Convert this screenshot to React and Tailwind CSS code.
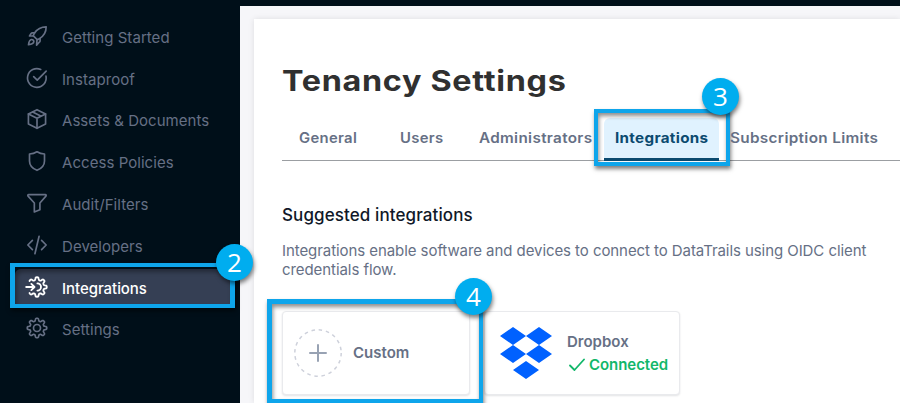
import React from "react";

// Outline of an eight-toothed cog; from and to are angles in degrees, 0 pointing left.
function cog(from, to) {
  const points = [];
  for (let a = from; a <= to; a += 3) {
    const t = (a * Math.PI) / 180;
    const wave = Math.tanh(2 * Math.cos(8 * t)) / Math.tanh(2);
    const r = 10.1 + 1.6 * wave;
    points.push(`${(12 - r * Math.cos(t)).toFixed(2)} ${(12 - r * Math.sin(t)).toFixed(2)}`);
  }
  return `M${points.join("L")}`;
}

const icons = {
  rocket: (
    <>
      <path d="M23 1C17 1 12.500 3.200 9 8.500l-1.600 3 5 5 3-1.600C20.800 11.500 23 7 23 1z" />
      <path d="M9.300 8.200H6.500a2 2 0 0 0-1.600.8L3 12l4.500 0M15.700 14.800v2.800a2 2 0 0 1-.8 1.600L11.500 23l.5-6.500" />
      <path d="M5.500 16.200c-2 .3-3.200 1.800-3.700 6.300 4.500-.5 6.200-1.700 6.400-3.700a2.500 2.500 0 0 0-2.700-2.600z" />
    </>
  ),
  check: (
    <>
      <path d="M22.800 9.800A11.200 11.200 0 1 1 16.500 1.800" />
      <path d="M23 3.800 12.300 14.500 8 10.300" />
    </>
  ),
  box: (
    <>
      <path d="M12 .8 22.300 6v12L12 23.200 1.700 18V6z" />
      <path d="M1.700 6 12 11.200 22.300 6M12 11.200v12M6.800 3.500l10.200 5.200" />
    </>
  ),
  shield: <path d="M12 .9c2.400 1.500 5.700 2.600 9 2.700v8.400c0 5.300-4 9.200-9 11.200-5-2-9-5.900-9-11.200V3.600C6.300 3.500 9.600 2.400 12 .9z" />,
  funnel: <path d="M2 2h20c1 0 1.300 1 .7 1.700L15.500 12v8.200L8.800 22.800V12L1.300 3.700C.7 3 1 2 2 2z" />,
  code: <path d="M6.500 6.500 1 12l5.500 5.500M17.500 6.500 23 12l-5.500 5.500M14.500 1.500l-5 21" />,
  gear: (
    <>
      <path d={`${cog(0, 357)}Z`} />
      <circle cx="12" cy="12" r="4.200" />
    </>
  ),
  connect: (
    <>
      <path d={cog(39, 321)} />
      <path d="M-1 12h9.800M5.200 8.300 9 12l-3.800 3.700M12.500 7.700a4.300 4.300 0 0 1 0 8.600" />
    </>
  ),
};

const nav = [
  { label: "Getting Started", icon: "rocket" },
  { label: "Instaproof", icon: "check" },
  { label: "Assets & Documents", icon: "box" },
  { label: "Access Policies", icon: "shield" },
  { label: "Audit/Filters", icon: "funnel" },
  { label: "Developers", icon: "code" },
  { label: "Integrations", icon: "connect", active: true },
  { label: "Settings", icon: "gear" },
];

function NavIcon({ name }) {
  return (
    <svg
      className="size-5 shrink-0 overflow-visible"
      viewBox="0 0 24 24"
      fill="none"
      stroke="currentColor"
      strokeWidth={name === "connect" ? 2.2 : 2}
      strokeLinecap="round"
      strokeLinejoin="round"
    >
      {icons[name]}
    </svg>
  );
}

function Step({ n, place }) {
  return (
    <span
      className={`absolute z-10 flex size-[37px] items-center justify-center rounded-full bg-[#00adef] pb-px font-['Open_Sans',sans-serif] text-[26px] leading-none font-medium tracking-normal text-white shadow-[1px_3px_4px_rgba(0,0,0,0.5)] ${place}`}
    >
      {n}
    </span>
  );
}

function Sidebar() {
  return (
    <nav className="h-full w-[240px] shrink-0 bg-[#000f19] pt-[15px]">
      {nav.map((item) => (
        <div
          key={item.label}
          className={`relative ml-[10px] flex h-[41.800px] w-[225px] items-center ${item.active ? "text-white" : "text-[#667085]"}`}
        >
          {item.active && (
            <>
              <span className="absolute inset-x-[5px] top-[3px] h-[36px] rounded-tl-md bg-[#353f54] shadow-[inset_2px_3px_4px_rgba(0,0,0,0.35)]" />
              <span className="absolute inset-x-0 -top-[3px] h-[45px] border-[5px] border-t-4 border-b-4 border-[#0ea5eb] shadow-[1px_3px_4px_rgba(0,0,0,0.5)]" />
              <Step n="2" place="left-[206px] -top-[22px]" />
            </>
          )}
          <span className="relative flex items-center pl-[17px]">
            <NavIcon name={item.icon} />
            <span className={`ml-[15px] pt-[4px] text-[15px] leading-5 whitespace-nowrap ${item.active ? "font-medium tracking-[-0.050px]" : "tracking-[0.05px]"}`}>
              {item.label}
            </span>
          </span>
        </div>
      ))}
    </nav>
  );
}

function Tabs() {
  return (
    <div className="flex h-[43px] w-[620px] border-b border-[#9b9ea2] text-[14px] leading-[20px] font-semibold tracking-[0.3px] whitespace-nowrap text-[#667085]">
      <span className="w-[118px] pt-[10px] pl-[17px]">
        <span className="inline-block origin-left scale-x-[1.06]">General</span>
      </span>
      <span className="w-[79px] pt-[10px]">
        <span className="inline-block origin-left scale-x-[1.06]">Users</span>
      </span>
      <span className="w-[125px] pt-[10px]">
        <span className="inline-block origin-left scale-x-[1.09]">Administrators</span>
      </span>
      <span className="relative h-[43px] w-[115px] rounded-t-md border-b-[3px] border-[#0b4a6f] bg-[#e0f2fe] pt-[10px] pl-[11px] font-bold text-[#0b4a6f]">
        <span className="inline-block origin-left scale-x-[1.085]">Integrations</span>
        <span className="absolute -top-[9px] -left-[10px] h-[57px] w-[136px] border-4 border-[#0ea5eb] shadow-[1px_3px_4px_rgba(0,0,0,0.5),inset_1px_3px_4px_rgba(0,0,0,0.45)]" />
        <Step n="3" place="left-[98px] -top-[40px]" />
      </span>
      <span className="pt-[10px] pl-[11px]">
        <span className="inline-block origin-left scale-x-[1.093]">Subscription Limits</span>
      </span>
    </div>
  );
}

function Cards() {
  const card = "relative flex h-[84px] items-center rounded border border-[#e9eaed] bg-white shadow-[0_1px_2px_rgba(16,24,40,0.12)]";
  return (
    <div className="flex gap-[14px] text-[15px] font-semibold text-[#667085]">
      <div className={`${card} w-[188px] pl-[11px]`}>
        <svg className="size-12" viewBox="0 0 48 48" fill="none">
          <circle cx="24" cy="24" r="23.200" stroke="#ced1db" strokeWidth="1.500" strokeDasharray="3.500 3.788" />
          <path d="M24 16v16M16 24h16" stroke="#98a2b3" strokeWidth="2" strokeLinecap="round" />
        </svg>
        <span className="ml-[11px] pt-px">Custom</span>
        <span className="absolute -top-[13px] -left-[16px] z-10 h-[105px] w-[216px] border-[5px] border-r-4 border-[#0ea5eb] shadow-[1px_3px_4px_rgba(0,0,0,0.5),inset_1px_3px_4px_rgba(0,0,0,0.45)]" />
        <Step n="4" place="left-[172px] -top-[34px]" />
      </div>
      <div className={`${card} w-[196px] pl-[15px]`}>
        <svg className="h-[52px] w-[52px]" viewBox="0 0 52 52" fill="#0061ff">
          <path d="M13 0 26 9 13 18 0 9zM39 0 52 9 39 18 26 9zM13 18 26 27 13 36 0 27zM39 18 52 27 39 36 26 27zM26 34 39 43 26 52 13 43z" />
        </svg>
        <div className="ml-[15px] flex flex-col">
          <span className="leading-[23px]">Dropbox</span>
          <span className="flex items-center leading-[23px] text-[#12b76a]">
            <svg className="mr-[4px] ml-[2px] h-4 w-4" viewBox="0 0 16 16" fill="none" stroke="currentColor" strokeWidth="1.800" strokeLinecap="round" strokeLinejoin="round">
              <path d="M1 8.500 5.500 13 15 2.500" />
            </svg>
            <span className="tracking-[-0.05px]">Connected</span>
          </span>
        </div>
      </div>
    </div>
  );
}

export default function App() {
  return (
    <div className="flex h-[403px] w-[900px] overflow-hidden bg-[#f6f6f9] font-['Inter',sans-serif]">
      <Sidebar />
      <main className="flex h-full min-w-0 flex-1 flex-col border-t-[6px] border-[#000f19] pt-[13px] pl-[14px]">
        <section className="flex-1 bg-white pl-[28px] shadow-[0_0_6px_rgba(0,0,0,0.1)]">
          <h1 className="w-max origin-left scale-x-[1.155] pt-[42px] text-[28px] leading-[40px] font-bold tracking-[0.6px] text-[#303030]">
            Tenancy Settings
          </h1>
          <div className="mt-[17px]">
            <Tabs />
          </div>
          <h2 className="mt-[42px] text-[17px] leading-6 font-medium tracking-[0.1px] text-[#101828]">Suggested integrations</h2>
          <p className="mt-[14px] text-[15px] leading-[19px] tracking-[-0.07px] whitespace-nowrap text-[#667085]">
            Integrations enable software and devices to connect to DataTrails using OIDC client
            <br />
            credentials flow.
          </p>
          <div className="mt-[32px]">
            <Cards />
          </div>
        </section>
      </main>
    </div>
  );
}
